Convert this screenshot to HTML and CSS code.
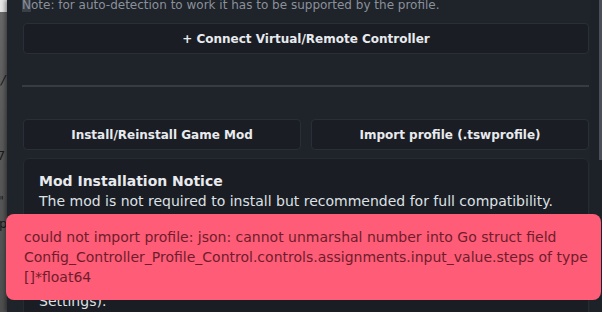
FILE: index.html
```html
<!DOCTYPE html>
<html>
<head>
<meta charset="utf-8">
<link rel="stylesheet" href="styles.css">
</head>
<body>
<div class="desktop">
  <div class="behind">
    <div class="behind-top"></div>
    <span class="frag f1">/</span>
    <span class="frag f2">7</span>
    <span class="frag f3">"</span>
    <span class="frag f4">p</span>
  </div>
  <div class="panel">
    <div class="content">
      <p class="note"><span class="sel">N</span>ote: for auto-detection to work it has to be supported by the profile.</p>
      <button class="btn wide">+ Connect Virtual/Remote Controller</button>
      <hr class="sep">
      <div class="row">
        <button class="btn">Install/Reinstall Game Mod</button>
        <button class="btn">Import profile (.tswprofile)</button>
      </div>
      <div class="card">
        <h3 class="card-title">Mod Installation Notice</h3>
        <p class="card-text">The mod is not required to install but recommended for full compatibility.</p>
        <p class="card-text">It lets the app talk to the game directly, which makes inputs more<br>reliable. Without it, controls are sent as simulated key presses,<br>so make sure the key bindings in the game match the defaults<br>(Options &gt; Controls) and that input is enabled in the game<br>Settings).</p>
      </div>
    </div>
    <div class="track"><div class="thumb"></div></div>
  </div>
  <div class="toast">could not import profile: json: cannot unmarshal number into Go struct field Config_Controller_Profile_Control.controls.assignments.input_value.steps of type []*float64</div>
</div>
</body>
</html>
```
FILE: styles.css
```css
* { box-sizing: border-box; }
html, body { margin: 0; padding: 0; height: 100%; }
body {
  font-family: "DejaVu Sans", sans-serif;
  background: #1f232a;
  overflow: hidden;
}
.desktop {
  position: relative;
  display: flex;
  width: 602px;
  height: 312px;
}
.behind {
  position: relative;
  width: 7px;
  flex: none;
  background: linear-gradient(180deg, #6a6a6a 0%, #5b5b5b 40%, #4f4f4f 100%);
  overflow: hidden;
}
.behind-top { height: 12px; background: #e6e6e6; }
.frag { position: absolute; color: #1a1a1a; font-size: 13px; }
.f1 { top: 72px; left: 1px; font-style: italic; }
.f2 { top: 148px; left: -3px; }
.f3 { top: 193px; left: -2px; }
.f4 { top: 216px; left: -1px; }
.panel {
  position: relative;
  flex: 1;
  background: #1f232a;
  box-shadow: -2px 0 4px rgba(0,0,0,0.4);
  overflow: hidden;
  display: flex;
}
.content {
  flex: 1;
  padding: 0 1px 0 16px;
  margin-top: -3px;
}
.note {
  margin: 0 0 0 -1px;
  font-size: 12px;
  line-height: 17px;
  color: #8a919b;
}
.sel { background: #3b4048; }
.btn {
  display: block;
  font-family: "DejaVu Sans", sans-serif;
  font-weight: bold;
  font-size: 12px;
  color: #e8eaee;
  background: #1a1d23;
  border: 1px solid #2a2e36;
  border-radius: 4px;
  height: 31px;
  padding: 0;
}
.wide { width: 100%; margin-top: 9px; }
.sep {
  border: 0;
  height: 2px;
  background: #363b44;
  margin: 31px 0 32px -1px;
}
.row { display: flex; gap: 10px; }
.row .btn { flex: 1; }
.card {
  margin-top: 8px;
  background: #1a1d23;
  border: 1px solid #262a31;
  border-radius: 6px;
  padding: 12px 15px;
  height: 200px;
}
.card-title {
  margin: 0;
  font-size: 14px;
  font-weight: bold;
  color: #e8eaee;
  line-height: 20px;
}
.card-text {
  margin: 0;
  font-size: 14px;
  line-height: 20px;
  color: #dde1e6;
  white-space: nowrap;
}
.track {
  width: 12px;
  flex: none;
  background: #1d2128;
  position: relative;
}
.thumb {
  position: absolute;
  right: 0;
  top: 0;
  width: 3px;
  height: 160px;
  background: #4a4f57;
}
.toast {
  position: absolute;
  left: 6px;
  top: 214px;
  width: 595px;
  height: 86px;
  background: #fe5c77;
  border-radius: 8px;
  padding: 13px 8px 0 18px;
  font-size: 14px;
  line-height: 20px;
  color: #6e1c2c;
}
```
